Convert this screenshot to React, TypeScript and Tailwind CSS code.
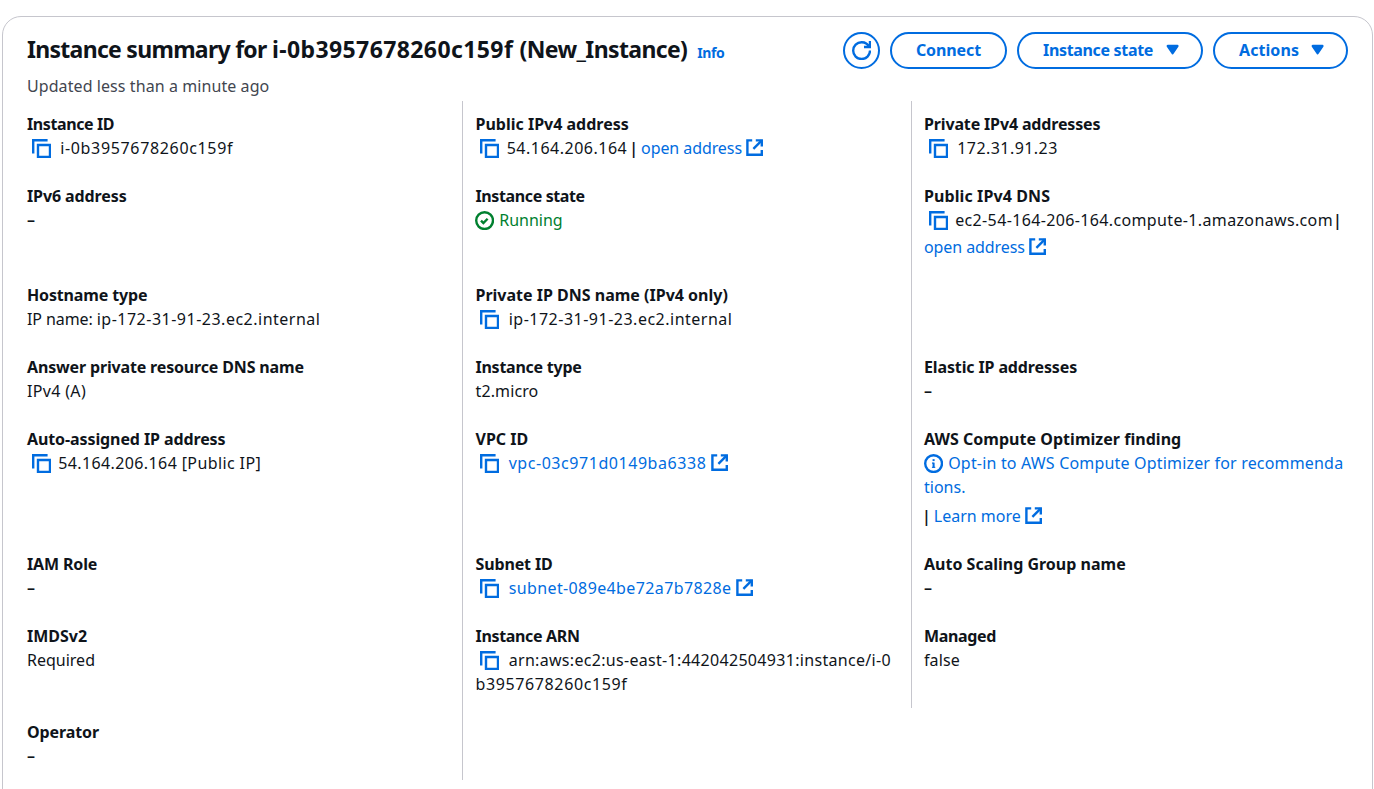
import type { ReactNode } from 'react';

const LINK = 'text-[#006ce0]';

function CopyIcon({ gap = 'mr-[9.4px]' }: { gap?: string }) {
  return (
    <svg viewBox="0 0 16 16" className={`mt-px ml-[4.6px] size-[19.2px] shrink-0 ${gap}`} fill="none" stroke="#006ce0" strokeWidth="2">
      <path d="M15 5H5v10h10V5Z" />
      <path d="M13 1H1v11" />
    </svg>
  );
}

function ExternalIcon() {
  return (
    <svg viewBox="0 0 16 16" className="ml-[3.5px] size-[19.2px] shrink-0" fill="none" stroke="#006ce0" strokeWidth="2">
      <path d="M9 2h5v5" />
      <path d="m7 9 7-7" />
      <path d="M14 10v4H2V2h4" />
    </svg>
  );
}

function CheckIcon() {
  return (
    <svg viewBox="0 0 16 16" className="mt-px mr-[5px] size-[19.2px] shrink-0" fill="none" stroke="#00802f" strokeWidth="2">
      <circle cx="8" cy="8" r="7" />
      <path d="m5 8 2 2 3.521-3.521" />
    </svg>
  );
}

function InfoIcon() {
  return (
    <svg viewBox="0 0 16 16" className="mt-px mr-[5px] size-[19.2px] shrink-0" fill="none" stroke="#006ce0" strokeWidth="2">
      <circle cx="8" cy="8" r="7" />
      <path d="M8 11.500V7.200" strokeWidth="1.700" />
      <path d="M8 7.600H6.700" strokeWidth="0.900" />
      <path d="M9.400 11.100H6.600" strokeWidth="0.900" />
      <path d="M8 5.900V4.300" strokeWidth="1.700" />
    </svg>
  );
}

function RefreshIcon() {
  return (
    <svg viewBox="0 0 16 16" className="size-[19.2px]" fill="none" stroke="#006ce0" strokeWidth="2">
      <path d="M10 5h5V0" />
      <path d="M15 8a6.957 6.957 0 0 1-7 7 6.957 6.957 0 0 1-7-7 6.957 6.957 0 0 1 7-7 6.870 6.870 0 0 1 6.300 4" />
    </svg>
  );
}

function Caret({ className }: { className: string }) {
  return (
    <svg viewBox="0 0 16 16" className={`size-[19.2px] ${className}`} fill="#006ce0" stroke="#006ce0" strokeWidth="2" strokeLinejoin="round">
      <path d="M4 5h8l-4 6-4-6Z" />
    </svg>
  );
}

type CellProps = { label: string; track?: string; divider?: boolean; inset?: string; children: ReactNode };

function Cell({ label, track = 'tracking-normal', divider = true, inset = 'pl-3', children }: CellProps) {
  return (
    <div className={`py-3 ${inset} ${divider ? 'border-l border-[#c6c6cd]' : ''}`}>
      <div className={`font-bold ${track}`}>{label}</div>
      {children}
    </div>
  );
}

const MID = 'pl-[12.5px]';

function Line({ children, className = '' }: { children: ReactNode; className?: string }) {
  return <div className={`flex h-6 items-center ${className}`}>{children}</div>;
}

const Dash = () => <Line><span className="font-semibold">–</span></Line>;

const BUTTON = 'flex h-[37px] items-center rounded-full border-2 border-[#006ce0] font-bold text-[#006ce0]';

export default function App() {
  return (
    <div className="h-[789px] w-[1374px] overflow-hidden bg-white pt-4 pl-[2px] font-['Noto_Sans','Open_Sans',sans-serif] text-[16px] leading-6 whitespace-nowrap text-[#0f141a]">
      <main className="h-[900px] w-[1371px] rounded-[19px] border border-[#c6c6cd] px-6">
        <header className="flex h-[83px] justify-between pt-[15px]">
          <div>
            <div className="flex h-[34px] items-baseline">
              <h1 className="text-[23px] leading-[34px] font-bold whitespace-pre">
                <span className="tracking-[-0.71px]">{'Instance summary for '}</span>
                <span className="tracking-[0.4px]">{'i-0b3957678260c159f '}</span>
                <span className="tracking-[-0.63px]">(New_Instance)</span>
              </h1>
              <a className="ml-[10px] text-[14px] font-bold tracking-[-0.4px] text-[#006ce0]">Info</a>
            </div>
            <p className="mt-[8px] tracking-[0.08px] text-[#424650]">Updated less than a minute ago</p>
          </div>
          <div className="flex gap-[10px]">
            <button className={`${BUTTON} w-[37px] justify-center`}><RefreshIcon /></button>
            <button className={`${BUTTON} w-[117px] justify-center pb-[2px] tracking-[-0.1px]`}>Connect</button>
            <button className={`${BUTTON} w-[186px] pb-[2px] pl-[24px] tracking-[-0.33px]`}>Instance state<Caret className="ml-[10px]" /></button>
            <button className={`${BUTTON} w-[135px] pb-[2px] pl-[24px] tracking-[0.07px]`}>Actions<Caret className="ml-[9px]" /></button>
          </div>
        </header>

        <section className="-mx-3 mt-px grid grid-cols-[447px_449px_449px] grid-rows-[71px_99px_72px_72px_125px_72px_96px_72px] [&>*:nth-child(-n+3)]:pt-[11px]">
          <Cell label="Instance ID" track="tracking-[-0.4px]" divider={false}>
            <Line><CopyIcon /><span className="tracking-[0.66px]">i-0b3957678260c159f</span></Line>
          </Cell>
          <Cell label="Public IPv4 address" inset={MID}>
            <Line><CopyIcon gap="mr-[7.4px]" /><span className="tracking-[0.5px]">54.164.206.164</span><span className="mr-[3px] ml-[2px] font-semibold">|</span><span className={`${LINK} tracking-[-0.08px]`}>open address</span><ExternalIcon /></Line>
          </Cell>
          <Cell label="Private IPv4 addresses" track="tracking-[-0.15px]">
            <Line><CopyIcon /><span className="tracking-[0.45px]">172.31.91.23</span></Line>
          </Cell>

          <Cell label="IPv6 address" track="tracking-[-0.1px]" divider={false}><Dash /></Cell>
          <Cell label="Instance state" track="tracking-[-0.38px]" inset={MID}>
            <Line className="-ml-[0.5px]"><CheckIcon /><span className="text-[#00802f]">Running</span></Line>
          </Cell>
          <Cell label="Public IPv4 DNS" track="tracking-[0.1px]">
            <Line><CopyIcon gap="mr-[7.4px]" /><span className="tracking-[0.36px]">ec2-54-164-206-164.compute-1.amazonaws.com</span><span className="font-semibold">|</span></Line>
            <Line className="mt-[3px]"><span className={`${LINK} tracking-[-0.08px]`}>open address</span><ExternalIcon /></Line>
          </Cell>

          <Cell label="Hostname type" track="tracking-[-0.15px]" divider={false}>
            <Line><span className="tracking-[-0.1px] whitespace-pre">{'IP name: '}</span><span className="tracking-[0.5px]">ip-172-31-91-23.ec2.internal</span></Line>
          </Cell>
          <Cell label="Private IP DNS name (IPv4 only)" inset={MID}>
            <Line><CopyIcon /><span className="tracking-[0.5px]">ip-172-31-91-23.ec2.internal</span></Line>
          </Cell>
          <div className="border-l border-[#c6c6cd]" />

          <Cell label="Answer private resource DNS name" track="tracking-[-0.16px]" divider={false}>
            <Line><span className="tracking-[0.33px]">IPv4 (A)</span></Line>
          </Cell>
          <Cell label="Instance type" track="tracking-[-0.25px]" inset={MID}>
            <Line><span className="tracking-[0.12px]">t2.micro</span></Line>
          </Cell>
          <Cell label="Elastic IP addresses" track="tracking-[-0.13px]"><Dash /></Cell>

          <Cell label="Auto-assigned IP address" track="tracking-[-0.1px]" divider={false}>
            <Line><CopyIcon gap="mr-[7.4px]" /><span className="tracking-[0.39px]">54.164.206.164 [Public IP]</span></Line>
          </Cell>
          <Cell label="VPC ID" inset={MID}>
            <Line><CopyIcon /><span className={`${LINK} tracking-[0.55px]`}>vpc-03c971d0149ba6338</span><ExternalIcon /></Line>
          </Cell>
          <Cell label="AWS Compute Optimizer finding" track="tracking-[0.03px]">
            <Line className={LINK}><InfoIcon /><span className="tracking-[0.18px]">Opt-in to AWS Compute Optimizer for recommenda</span></Line>
            <Line className={LINK}>tions.</Line>
            <Line className="mt-[5px]"><span className="mr-[3px] -ml-[2px] font-semibold">|</span><span className={LINK}>Learn more</span><ExternalIcon /></Line>
          </Cell>

          <Cell label="IAM Role" track="tracking-[-0.15px]" divider={false}><Dash /></Cell>
          <Cell label="Subnet ID" track="tracking-[-0.14px]" inset={MID}>
            <Line><CopyIcon /><span className={`${LINK} tracking-[0.38px]`}>subnet-089e4be72a7b7828e</span><ExternalIcon /></Line>
          </Cell>
          <Cell label="Auto Scaling Group name"><Dash /></Cell>

          <Cell label="IMDSv2" divider={false}><Line>Required</Line></Cell>
          <Cell label="Instance ARN" track="tracking-[-0.34px]" inset={MID}>
            <Line><CopyIcon /><span className="tracking-[0.31px]">arn:aws:ec2:us-east-1:442042504931:instance/i-0</span></Line>
            <Line><span className="tracking-[0.62px]">b3957678260c159f</span></Line>
          </Cell>
          <Cell label="Managed" track="tracking-[-0.35px]"><Line><span className="tracking-[0.1px]">false</span></Line></Cell>

          <Cell label="Operator" track="tracking-[-0.1px]" divider={false}><Dash /></Cell>
          <div className="border-l border-[#c6c6cd]" />
        </section>
      </main>
    </div>
  );
}
